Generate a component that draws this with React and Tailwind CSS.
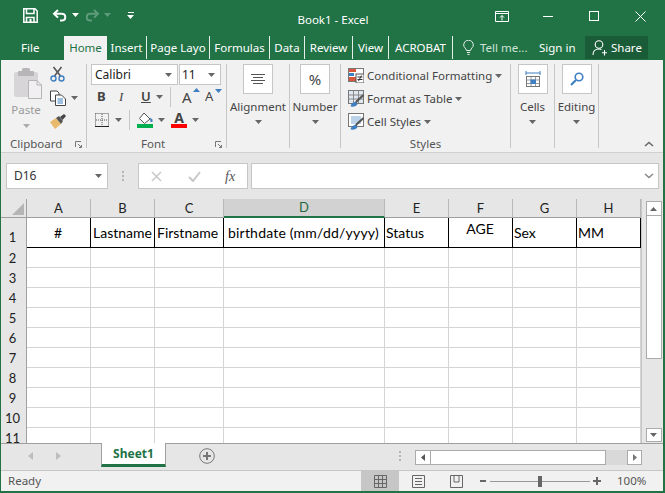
const colWidths = [64, 64, 69, 161, 64, 64, 64, 64];
const colNames = ["A", "B", "C", "D", "E", "F", "G", "H"];
const rows = [2, 3, 4, 5, 6, 7, 8, 9, 10, 11];

function Caret({ className = "text-[#666]", up = false }) {
  return (
    <svg width="7" height="4" viewBox="0 0 7 4" className={`shrink-0 ${className}`}>
      <path d={up ? "M0 4L3.5 0L7 4Z" : "M0 0H7L3.5 4Z"} fill="currentColor" />
    </svg>
  );
}

function SaveIcon() {
  return (
    <svg width="15" height="15" viewBox="0 0 15 15" fill="none" stroke="white" strokeWidth="1.5">
      <path d="M.8.8H12L14.2 3V14.2H.8Z" />
      <path d="M3.5 1V5.5H11V1" />
      <path d="M3.5 14V9.5H11V14" />
      <rect x="6.5" y="11" width="2" height="3" fill="white" stroke="none" />
    </svg>
  );
}

function UndoIcon({ color = "white", flip = false }) {
  return (
    <svg width="15" height="13" viewBox="0 0 15 13" fill="none" stroke={color} strokeWidth="2" className={flip ? "-scale-x-100" : ""}>
      <path d="M6 1L2 4.8L6 8.6" />
      <path d="M2 4.8H9.5C14.5 4.8 14.5 11.5 9.5 11.5H8" />
    </svg>
  );
}

function PasteIcon() {
  return (
    <svg width="30" height="31" viewBox="0 0 30 31">
      <rect x="1" y="4" width="24" height="25" rx="2" fill="#d8d5d8" />
      <rect x="9" y="0" width="8" height="5" rx="1.5" fill="#b8b5b8" />
      <rect x="5" y="3" width="16" height="5" rx="1" fill="#b8b5b8" />
      <path d="M15.5 12.5H24L28.5 17V30.5H15.5Z" fill="#f1eff1" stroke="#b5b5b5" />
      <path d="M24 12.5V17H28.5" fill="none" stroke="#b5b5b5" />
    </svg>
  );
}

function CutIcon() {
  return (
    <svg width="15" height="16" viewBox="0 0 15 16" fill="none">
      <path d="M3.5 1L10.5 10M11.5 1L4.5 10" stroke="#555" strokeWidth="1.6" />
      <circle cx="3.5" cy="12.5" r="2.5" stroke="#3f7fc1" strokeWidth="1.4" />
      <circle cx="11.5" cy="12.5" r="2.5" stroke="#3f7fc1" strokeWidth="1.4" />
    </svg>
  );
}

function CopyIcon() {
  return (
    <svg width="16" height="16" viewBox="0 0 16 16" fill="none">
      <path d="M.5 1H7L9 3V11H.5Z" fill="#fff" stroke="#444" />
      <path d="M5.5 5H11.5L15.5 9V15.5H5.5Z" fill="#fff" stroke="#444" />
      <path d="M7.5 9H13M7.5 11H13M7.5 13H13" stroke="#3f7fc1" />
    </svg>
  );
}

function PainterIcon() {
  return (
    <svg width="17" height="15" viewBox="0 0 17 15">
      <path d="M0 8L6 4L11 10L5 15Z" fill="#e8b96a" />
      <path d="M6 4L9 2L13 7L11 10Z" fill="#555" />
      <path d="M10 3L14 0L16 2L12.5 6Z" fill="#444" />
    </svg>
  );
}

function Launcher() {
  return (
    <svg width="7" height="7" viewBox="0 0 7 7" fill="none" stroke="#777">
      <path d="M.5 6V.5H6" />
      <path d="M3 3L6.5 6.5M6.5 4V6.5H4" />
    </svg>
  );
}

function BordersIcon() {
  return (
    <svg width="14" height="14" viewBox="0 0 14 14" fill="none" stroke="#555" strokeDasharray="1 1">
      <path d="M.5 .5H13.5V13M.5 .5V13M7 1V13M1 7H13" />
      <path d="M0 13.5H14" strokeDasharray="none" stroke="#222" />
    </svg>
  );
}

function FillIcon() {
  return (
    <svg width="16" height="16" viewBox="0 0 16 16">
      <path d="M7 1L13 7L7.5 11.5L2.5 6.5Z" fill="#fff" stroke="#555" />
      <path d="M13 5.5L15.5 7.5V10H13.5Z" fill="#3f7fc1" />
      <rect x="0" y="12" width="16" height="4" fill="#00b050" />
    </svg>
  );
}

function TallIcon({ children, w = 16, h = 16 }) {
  return <svg width={w} height={h} viewBox={`0 0 ${w} ${h}`}>{children}</svg>;
}

function CondIcon() {
  return (
    <TallIcon h="15">
      <rect x="0.5" y="0.5" width="15" height="13" fill="#fff" stroke="#777" />
      <rect x="1" y="1" width="7" height="3" fill="#d9573a" />
      <rect x="1" y="5" width="5" height="3" fill="#3f7fc1" />
      <rect x="1" y="9" width="7" height="4" fill="#d9573a" />
      <rect x="8" y="6" width="8" height="9" fill="#fff" stroke="#555" />
      <path d="M9.5 9H14.5M9.5 11.5H14.5M13.5 7.5L10.5 13" stroke="#333" />
    </TallIcon>
  );
}

function TableIcon({ light = false }) {
  return (
    <TallIcon h="17">
      <rect x="0.5" y="0.5" width="15" height="13" fill={light ? "#fff" : "#dfe7f0"} stroke="#777" />
      {light ? (
        <rect x="3" y="3" width="10" height="8" fill="#bcd2e8" />
      ) : (
        <path d="M5.5 1V13M10.5 1V13M1 5H15M1 9H15" stroke="#8a8a8a" />
      )}
      <path d="M15.5 5L9 11L7 14" stroke="#555" strokeWidth="2" fill="none" />
      <path d="M2.5 16.5C3 13.5 5 12 7.5 12L9.5 14C9 16 6 17 2.5 16.5Z" fill="#3f7fc1" />
    </TallIcon>
  );
}

function CellsIcon() {
  return (
    <TallIcon h="17">
      <path d="M1 2H15" stroke="#3f7fc1" />
      <path d="M1 0V4M15 0V4" stroke="#3f7fc1" />
      <rect x="1.5" y="5.5" width="13" height="10" fill="#fff" stroke="#777" />
      <path d="M6 6V15M10.5 6V15M2 9H14M2 12.5H14" stroke="#999" />
      <rect x="5.5" y="8.5" width="5.5" height="4.5" fill="#3f7fc1" />
    </TallIcon>
  );
}

function SearchIcon() {
  return (
    <TallIcon w="14" h="14">
      <circle cx="9" cy="5" r="3.8" fill="none" stroke="#3f7fc1" strokeWidth="1.6" />
      <path d="M6 8L1 13" stroke="#3f7fc1" strokeWidth="2.2" />
    </TallIcon>
  );
}

function BigButton({ label, children, width }) {
  return (
    <div className={`flex flex-col items-center border-r border-[#c6c6c6] h-[84px] ${width}`}>
      <div className="w-[30px] h-[30px] bg-white border border-[#c6c6c6] flex items-center justify-center text-[#444]">
        {children}
      </div>
      <span className="mt-[5px] leading-[16px]">{label}</span>
      <div className="mt-[5px]"><Caret /></div>
    </div>
  );
}

function StyleRow({ icon, label }) {
  return (
    <div className="flex items-center h-[23px]">
      <div className="w-[19px] flex items-center">{icon}</div>
      <span className="whitespace-nowrap">{label}</span>
      <div className="ml-[3px]"><Caret /></div>
    </div>
  );
}

function Tab({ children, width, last }) {
  return (
    <div className={`h-[23px] flex items-center justify-center whitespace-nowrap overflow-hidden ${width} ${last ? "" : "border-r border-[#e6efe9]"}`}>
      {children}
    </div>
  );
}

function Ribbon() {
  return (
    <div className="flex h-[93px] bg-[#f1f1f1] text-[11.5px] text-[#444] pt-[4px] border-b border-[#d0d0d0] shrink-0">
      <div className="w-[86px] h-[84px] border-r border-[#c6c6c6] flex flex-col">
        <div className="flex h-[76px] shrink-0">
          <div className="w-[49px] flex flex-col items-center pl-[5px] pt-[4px] text-[#9a9a9a]">
            <PasteIcon />
            <span className="mt-[3px] leading-[16px] pr-[4px]">Paste</span>
            <div className="mt-[6px] pr-[4px]"><Caret className="text-[#aaa]" /></div>
          </div>
          <div className="flex flex-col gap-[8px] pt-[2px]">
            <CutIcon />
            <div className="flex items-center gap-[5px]"><CopyIcon /><Caret /></div>
            <PainterIcon />
          </div>
        </div>
        <div className="flex items-center justify-between pl-[9px] pr-[4px] h-[8px] shrink-0 text-[#555]">
          <span>Clipboard</span>
          <Launcher />
        </div>
      </div>

      <div className="w-[140px] h-[84px] border-r border-[#c6c6c6] flex flex-col pl-[4px]">
        <div className="flex gap-px h-[21px] shrink-0">
          <div className="w-[87px] bg-white border border-[#c6c6c6] flex items-center justify-between pl-[3px] pr-[5px] text-[#222] text-[12px]">
            <span>Calibri</span><Caret />
          </div>
          <div className="w-[42px] bg-white border border-[#c6c6c6] flex items-center justify-between pl-[2px] pr-[5px] text-[#222] text-[12px]">
            <span>11</span><Caret />
          </div>
        </div>
        <div className="flex items-center h-[22px] mt-px pl-[6px] shrink-0">
          <span className="w-[22px] font-bold text-[13px]">B</span>
          <span className="w-[22px] italic text-[13px] font-['Liberation_Serif',serif]">I</span>
          <span className="w-[15px] underline text-[13px] font-semibold">U</span>
          <Caret />
          <div className="w-px h-[20px] bg-[#c6c6c6] ml-[7px]" />
          <div className="relative ml-[11px] w-[22px] text-[15px]">
            A
            <div className="absolute right-[4px] top-[2px]"><Caret className="text-[#3f7fc1]" up /></div>
          </div>
          <div className="relative w-[20px] ml-px text-[13px]">
            A
            <div className="absolute right-[3px] top-[2px]"><Caret className="text-[#3f7fc1]" /></div>
          </div>
        </div>
        <div className="flex items-center h-[23px] pl-[4px] shrink-0">
          <BordersIcon />
          <div className="ml-[6px]"><Caret /></div>
          <div className="w-px h-[20px] bg-[#c6c6c6] ml-[7px]" />
          <div className="ml-[7px]"><FillIcon /></div>
          <div className="ml-[5px]"><Caret /></div>
          <div className="ml-[6px] w-[16px] flex flex-col items-center">
            <span className="text-[14px] font-bold leading-[12px]">A</span>
            <div className="w-[16px] h-[4px] bg-[#ff0000]" />
          </div>
          <div className="ml-[5px]"><Caret /></div>
        </div>
        <div className="flex items-center mt-[9px] h-[8px] shrink-0 text-[#555]">
          <span className="ml-[50px]">Font</span>
          <div className="ml-auto mr-[4px]"><Launcher /></div>
        </div>
      </div>

      <BigButton label="Alignment" width="w-[63px]">
        <svg width="14" height="10" viewBox="0 0 14 10" stroke="#555">
          <path d="M0 .5H14M2 3.5H12M0 6.5H14M2 9.5H12" />
        </svg>
      </BigButton>
      <BigButton label="Number" width="w-[51px]">
        <span className="text-[15px]">%</span>
      </BigButton>

      <div className="w-[170px] h-[84px] border-r border-[#c6c6c6] flex flex-col pl-[7px]">
        <div className="h-[76px] shrink-0">
          <StyleRow icon={<CondIcon />} label="Conditional Formatting" />
          <StyleRow icon={<TableIcon />} label="Format as Table" />
          <StyleRow icon={<TableIcon light />} label="Cell Styles" />
        </div>
        <div className="h-[8px] shrink-0 flex items-center justify-center text-[#555] pr-[7px]">Styles</div>
      </div>

      <BigButton label="Cells" width="w-[44px]"><CellsIcon /></BigButton>
      <BigButton label="Editing" width="w-[44px]"><SearchIcon /></BigButton>

      <div className="flex-1 flex justify-end items-end pr-[9px] pb-[5px]">
        <svg width="10" height="6" viewBox="0 0 10 6" fill="none" stroke="#666" strokeWidth="1.5">
          <path d="M1 5L5 1.5L9 5" />
        </svg>
      </div>
    </div>
  );
}

function FormulaBar() {
  return (
    <div className="h-[46px] bg-[#e6e6e6] flex pt-[10px] pl-[5px] text-[12px] text-[#333] shrink-0">
      <div className="w-[102px] h-[26px] bg-white border border-[#c6c6c6] flex items-center justify-between pl-[7px] pr-[5px]">
        <span>D16</span><Caret />
      </div>
      <div className="w-[30px] flex flex-col items-center justify-center gap-[2px] h-[26px]">
        <div className="w-[2px] h-[2px] bg-[#b5b5b5]" />
        <div className="w-[2px] h-[2px] bg-[#b5b5b5]" />
        <div className="w-[2px] h-[2px] bg-[#b5b5b5]" />
      </div>
      <div className="w-[110px] h-[26px] bg-white border border-[#c6c6c6] flex items-center pl-[12px]">
        <svg width="11" height="11" viewBox="0 0 11 11" stroke="#c8c8c8" strokeWidth="1.5"><path d="M1 1L10 10M10 1L1 10" /></svg>
        <svg className="ml-[26px]" width="13" height="11" viewBox="0 0 13 11" fill="none" stroke="#c8c8c8" strokeWidth="2"><path d="M1 6L5 10L12 1" /></svg>
        <span className="ml-[24px] italic text-[#555] font-['Liberation_Serif',serif] text-[14px]">fx</span>
      </div>
      <div className="ml-[3px] w-[408px] h-[26px] bg-white border border-[#c6c6c6] flex items-center justify-end pr-[4px]">
        <svg width="10" height="6" viewBox="0 0 10 6" fill="none" stroke="#888" strokeWidth="1.5"><path d="M1 1L5 4.5L9 1" /></svg>
      </div>
    </div>
  );
}

function HeaderCell({ name, width, selected }) {
  return (
    <div
      className={`h-[19px] pt-px flex items-center justify-center border-r border-[#b8b8b8] text-[13px] font-['Lato',sans-serif] ${
        selected ? "bg-[#d2d2d2] border-b-2 border-b-[#217346] text-[#1e6b41]" : "bg-[#e6e6e6] border-b border-b-[#9f9f9f] text-[#222]"
      }`}
      style={{ width }}
    >
      {name}
    </div>
  );
}

function RowHeader({ children, height, align = "items-center" }) {
  return (
    <div className={`w-[26px] pt-px flex ${align} justify-center bg-[#e6e6e6] border-r border-[#9f9f9f] text-[13px] font-['Lato',sans-serif] text-[#222] pr-[2px]`} style={{ height }}>
      {children}
    </div>
  );
}

function Sheet() {
  const titles = [
    { text: "#", cls: "justify-center pr-[1px]" },
    { text: "Lastname", cls: "pl-[2px]" },
    { text: "Firstname", cls: "pl-[2px]" },
    { text: "birthdate (mm/dd/yyyy)", cls: "pl-[4px] tracking-[0.2px]" },
    { text: "Status", cls: "pl-[1px]" },
    { text: "AGE", cls: "justify-center pb-[8px] pr-[1px]" },
    { text: "Sex", cls: "pl-[1px]" },
    { text: "MM", cls: "pl-[1px]" },
  ];

  return (
    <div className="h-[244px] flex bg-white overflow-hidden shrink-0">
      <div className="w-[640px] shrink-0">
        <div className="flex">
          <div className="w-[26px] h-[19px] bg-[#e6e6e6] border-r border-b border-[#9f9f9f] flex items-end justify-end p-[2px]">
            <svg width="12" height="12" viewBox="0 0 12 12"><path d="M12 0V12H0Z" fill="#b5b5b5" /></svg>
          </div>
          {colNames.map((name, i) => (
            <HeaderCell key={name} name={name} width={colWidths[i]} selected={name === "D"} />
          ))}
        </div>
        <div className="flex">
          <RowHeader height={30} align="items-end"><span className="pb-[1px]">1</span></RowHeader>
          {titles.map((t, i) => (
            <div
              key={t.text}
              className={`h-[30px] flex items-center whitespace-nowrap border-r border-b border-black text-black text-[14px] font-['Lato',sans-serif] ${t.cls}`}
              style={{ width: colWidths[i] }}
            >
              {t.text}
            </div>
          ))}
        </div>
        {rows.map((row) => (
          <div key={row} className="flex">
            <RowHeader height={20}>{row}</RowHeader>
            {colWidths.map((w, i) => (
              <div key={i} className="h-[20px] border-r border-b border-[#d4d4d4]" style={{ width: w }} />
            ))}
          </div>
        ))}
      </div>

      <div className="w-[22px] bg-[#e6e6e6] border-l border-[#c6c6c6] flex flex-col items-center pt-[2px] pl-[2px]">
        <div className="w-[16px] h-[15px] bg-white border border-[#ababab] flex items-center justify-center">
          <Caret up />
        </div>
        <div className="w-[16px] h-[144px] bg-white border border-[#ababab] -mt-px" />
        <div className="flex-1" />
        <div className="w-[16px] h-[14px] bg-white border border-[#ababab] flex items-center justify-center mb-px">
          <Caret />
        </div>
      </div>
    </div>
  );
}

function SheetTabs() {
  return (
    <div className="h-[27px] bg-[#e6e6e6] border-t border-[#9f9f9f] flex text-[12px] shrink-0">
      <div className="w-[100px] flex items-center pl-[27px] gap-[23px] pb-[3px]">
        <svg width="5" height="8" viewBox="0 0 5 8"><path d="M5 0V8L0 4Z" fill="#bdbdbd" /></svg>
        <svg width="5" height="8" viewBox="0 0 5 8"><path d="M0 0V8L5 4Z" fill="#bdbdbd" /></svg>
      </div>
      <div className="w-[65px] h-[24px] -mt-px bg-white border-x border-[#9f9f9f] border-b-[3px] border-b-[#217346] flex items-center justify-center font-bold text-[#217346]">
        Sheet1
      </div>
      <div className="w-[49px] flex items-center justify-end pb-[2px]">
        <svg width="16" height="16" viewBox="0 0 16 16" fill="none" stroke="#777">
          <circle cx="8" cy="8" r="7.3" />
          <path d="M4 8H12M8 4V12" strokeWidth="2" />
        </svg>
      </div>
      <div className="w-[186px] flex items-center justify-end pb-[3px]">
        <div className="flex flex-col gap-[2px]">
          <div className="w-[2px] h-[2px] bg-[#b5b5b5]" />
          <div className="w-[2px] h-[2px] bg-[#b5b5b5]" />
          <div className="w-[2px] h-[2px] bg-[#b5b5b5]" />
        </div>
      </div>
      <div className="ml-[14px] w-[227px] h-[15px] mt-[6px] flex bg-[#d9d9d9]">
        <div className="w-[16px] bg-white border border-[#ababab] flex items-center justify-center">
          <svg width="4" height="7" viewBox="0 0 4 7"><path d="M4 0V7L0 3.5Z" fill="#555" /></svg>
        </div>
        <div className="w-[176px] bg-white border border-[#ababab] -ml-px" />
        <div className="flex-1" />
        <div className="w-[15px] bg-white border border-[#ababab] flex items-center justify-center">
          <svg width="4" height="7" viewBox="0 0 4 7"><path d="M0 0V7L4 3.5Z" fill="#777" /></svg>
        </div>
      </div>
    </div>
  );
}

function StatusBar() {
  return (
    <div className="h-[21px] bg-[#f1f1f1] border-t border-[#c6c6c6] flex items-center text-[11.5px] text-[#555] shrink-0">
      <span className="ml-[7px] w-[353px]">Ready</span>
      <div className="w-[38px] h-full bg-[#c6c6c6] flex items-center justify-center">
        <svg width="13" height="13" viewBox="0 0 13 13" fill="none" stroke="#666"><path d="M.5 .5H12.5V12.5H.5ZM4.5 1V12M8.5 1V12M1 4.5H12M1 8.5H12" /></svg>
      </div>
      <div className="w-[38px] flex justify-center">
        <svg width="13" height="13" viewBox="0 0 13 13" fill="none" stroke="#666"><path d="M.5 .5H12.5V12.5H.5Z" /><path d="M3 3.5H10M3 6.5H10M3 9.5H10" /></svg>
      </div>
      <div className="w-[38px] flex justify-center">
        <svg width="13" height="13" viewBox="0 0 13 13" fill="none" stroke="#666"><path d="M.5 .5H12.5V12.5H.5ZM4 1V7H9V1" /></svg>
      </div>
      <div className="ml-[5px] w-[6px] h-[2px] bg-[#666]" />
      <div className="ml-[4px] w-[100px] h-px bg-[#999] relative">
        <div className="absolute left-[48px] -top-[5px] w-[4px] h-[11px] bg-[#666]" />
      </div>
      <svg className="ml-[3px]" width="8" height="8" viewBox="0 0 8 8"><path d="M0 4H8M4 0V8" stroke="#666" strokeWidth="2" /></svg>
      <span className="ml-[16px]">100%</span>
    </div>
  );
}

export default function App() {
  return (
    <div className="w-[665px] h-[493px] bg-[#217346] flex flex-col overflow-hidden font-['Noto_Sans',sans-serif]">
      <div className="h-[36px] flex items-center text-white text-[12px] shrink-0">
        <div className="flex items-center pb-[6px]">
          <div className="ml-[23px]"><SaveIcon /></div>
          <div className="ml-[14px]"><UndoIcon /></div>
          <div className="ml-[5px]"><Caret className="text-white" /></div>
          <div className="ml-[6px]"><UndoIcon color="#5f9b7b" flip /></div>
          <div className="ml-[4px]"><Caret className="text-[#5f9b7b]" /></div>
          <div className="ml-[16px] flex flex-col items-center gap-[2px]">
            <div className="w-[6px] h-px bg-white" />
            <Caret className="text-white" />
          </div>
        </div>
        <div className="ml-[161px] w-[76px] text-center whitespace-nowrap pt-[4px] text-[11.5px]">Book1 - Excel</div>
        <div className="flex items-center pb-[4px]">
          <svg className="ml-[124px]" width="14" height="11" viewBox="0 0 14 11" fill="none" stroke="white">
            <path d="M.5 .5H13.5V10.5H.5ZM1 2.5H13M7 9.5V4.5M5 6.5L7 4.5L9 6.5" />
          </svg>
          <div className="ml-[34px] w-[10px] h-px bg-white" />
          <div className="ml-[36px] w-[10px] h-[10px] border border-white" />
          <svg className="ml-[36px]" width="11" height="11" viewBox="0 0 11 11" stroke="white"><path d="M.5 .5L10.5 10.5M10.5 .5L.5 10.5" /></svg>
        </div>
      </div>

      <div className="h-[24px] flex text-white text-[11.5px] shrink-0">
        <div className="w-[64px] h-[23px] flex items-center pl-[21px]">File</div>
        <div className="w-[43px] h-[24px] bg-[#f1f1f1] text-[#217346] flex items-center justify-center pb-px">Home</div>
        <Tab width="w-[40px]">Insert</Tab>
        <Tab width="w-[63px]">Page Layo</Tab>
        <Tab width="w-[60px]">Formulas</Tab>
        <Tab width="w-[35px]">Data</Tab>
        <Tab width="w-[48px]">Review</Tab>
        <Tab width="w-[36px]">View</Tab>
        <Tab width="w-[64px]">ACROBAT</Tab>
        <div className="h-[23px] flex items-center pl-[10px] w-[86px] text-[#cfe3d8]">
          <svg width="11" height="15" viewBox="0 0 11 15" fill="none" stroke="#e6efe9">
            <path d="M3.5 10.5C3 8 .7 7.5 .7 5A4.8 4.8 0 0 1 10.3 5C10.3 7.5 8 8 7.5 10.5ZM4 12.5H7M4.5 14.5H6.5" />
          </svg>
          <span className="ml-[6px] whitespace-nowrap">Tell me...</span>
        </div>
        <div className="h-[23px] flex items-center w-[46px] whitespace-nowrap">Sign in</div>
        <div className="w-[63px] h-[23px] bg-[#1a5c38] flex items-center pl-[7px]">
          <svg width="16" height="16" viewBox="0 0 16 16" fill="none" stroke="white" strokeWidth="1.1">
            <circle cx="7" cy="4.5" r="3.8" />
            <path d="M1 15C1 11 3.5 9 7 9C8 9 9 9.2 9.5 9.5M12.5 10V15.5M10 12.8H15" />
          </svg>
          <span className="ml-[3px]">Share</span>
        </div>
      </div>

      <div className="pl-px pr-[2px] pb-[2px] flex flex-col flex-1 min-h-0">
        <Ribbon />
        <FormulaBar />
        <Sheet />
        <SheetTabs />
        <StatusBar />
      </div>
    </div>
  );
}
